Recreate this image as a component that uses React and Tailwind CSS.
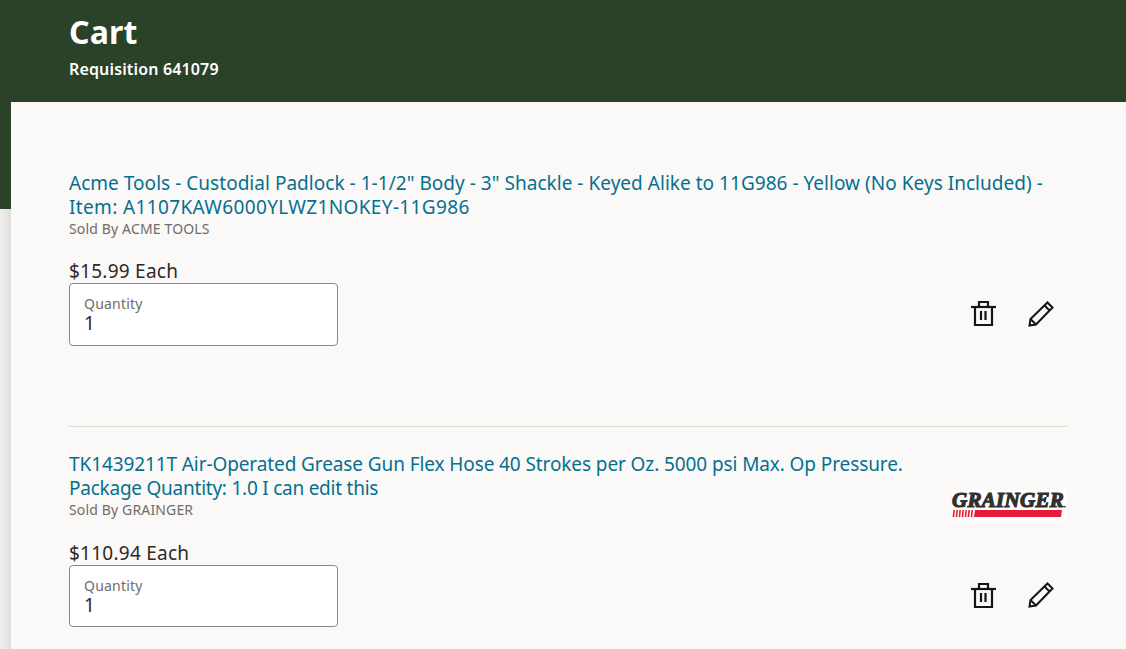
const items = [
  {
    lines: [
      {
        text: 'Acme Tools - Custodial Padlock - 1-1/2" Body - 3" Shackle - Keyed Alike to 11G986 - Yellow (No Keys Included) -',
        className: "tracking-[0.03px]",
      },
      { text: "Item: A1107KAW6000YLWZ1NOKEY-11G986", className: "tracking-[0.36px]" },
    ],
    seller: "Sold By ACME TOOLS",
    price: "$15.99 Each",
  },
  {
    lines: [
      {
        text: "TK1439211T Air-Operated Grease Gun Flex Hose 40 Strokes per Oz. 5000 psi Max. Op Pressure.",
        className: "tracking-[-0.1px]",
      },
      { text: "Package Quantity: 1.0 I can edit this", className: "tracking-[-0.24px]" },
    ],
    seller: "Sold By GRAINGER",
    price: "$110.94 Each",
    logo: true,
  },
]

function TrashIcon() {
  return (
    <svg width="25" height="25" viewBox="0 0 25 25" fill="none" stroke="#161513" strokeWidth="2.2">
      <path d="M0 6h25" />
      <path d="M4 6v18h17V6" />
      <path d="M8 6V1h9v5" />
      <path d="M10 10v9M14.5 10v9" />
    </svg>
  )
}

function PencilIcon() {
  return (
    <svg width="26" height="26" viewBox="0 0 26 26" fill="none" stroke="#161513" strokeWidth="2">
      <path d="M1.5 24.5l1-6.5L19.5 1.5l5 5L8 23.5z" />
      <path d="M16.5 4.5l5 5" />
      <path d="M2.5 18l5.5 5.5" />
    </svg>
  )
}

function GraingerLogo() {
  return (
    <div className="mb-[-1px] flex h-[31px] w-[115px] flex-col items-start bg-white pt-[1px]">
      <span
        className="whitespace-nowrap text-[21px] leading-[18px] font-bold italic tracking-[0.3px] text-[#33312c] [-webkit-text-stroke:1.2px_#33312c]"
        style={{ fontFamily: '"Liberation Serif", serif' }}
      >
        GRAINGER<span className="text-[5px] leading-none not-italic tracking-normal">.</span>
      </span>
      <svg width="110" height="7" viewBox="0 0 110 7" className="mt-[1px] shrink-0">
        <path fill="#e31b36" d="M1.4 0h1.6L2.2 7H.6zM4.4 0h1.6L5.2 7H3.6zM7.4 0h1.6L8.2 7H6.6zM10.4 0h1.6l-.8 7H9.6zM13.4 0h1.6l-.8 7h-1.6zM16.4 0h1.6l-.8 7h-1.6zM19.4 0h1.6l-.8 7h-1.6z" />
        <path fill="#e31b36" d="M23 0h87l-1 7H22z" />
      </svg>
    </div>
  )
}

function CartItem({ item }) {
  return (
    <div>
      <div className="flex items-end justify-between">
        <div>
          <a className="block whitespace-nowrap text-[19px] leading-[24px] text-[#04708f]">
            {item.lines.map((line) => (
              <span key={line.text} className={`block ${line.className}`}>
                {line.text}
              </span>
            ))}
          </a>
          <p className="text-[14px] tracking-[0.15px] leading-[20px] text-[#6f6c69]">{item.seller}</p>
        </div>
        {item.logo && <GraingerLogo />}
      </div>
      <p className={`${item.logo ? "mt-[21px]" : "mt-[20px]"} text-[19px] tracking-[0.25px] leading-[24px] text-[#2c2a28]`}>
        {item.price}
      </p>
      <div className="flex items-center justify-between">
        <label
          className={`block ${item.logo ? "h-[62px]" : "h-[63px]"} w-[269px] rounded-[4px] border border-[#8b8884] bg-white px-[14px] pt-[11px]`}
        >
          <span className="block text-[14px] tracking-[0.2px] leading-[18px] text-[#6f6c69]">Quantity</span>
          <span className="block text-[19px] leading-[20px] text-[#2c2a28]">1</span>
        </label>
        <div className="mr-[13px] mb-[2px] flex items-center gap-[32px]">
          <TrashIcon />
          <PencilIcon />
        </div>
      </div>
    </div>
  )
}

export default function App() {
  return (
    <div className="h-[649px] overflow-hidden bg-[#f1efed]" style={{ fontFamily: '"Noto Sans", sans-serif' }}>
      <header className="h-[102px] bg-[#2a4228] pl-[69px] pt-[10px] text-white">
        <h1 className="text-[32px] tracking-[0.2px] leading-[43px] font-bold">Cart</h1>
        <p className="mt-[5px] text-[16px] tracking-[0.15px] leading-[22px] font-semibold">Requisition 641079</p>
      </header>
      <div className="flex">
        <div className="w-[11px] shrink-0">
          <div className="h-[107px] bg-[#2a4228]" />
          <div className="h-[440px] bg-gradient-to-r from-[#f1efed] to-[#dfdddb]" />
        </div>
        <main className="h-[547px] flex-1 bg-[#fbf9f8] pl-[58px] pr-[59px] pt-[69px]">
          <CartItem item={items[0]} />
          <hr className="mt-[80px] mb-[25px] border-[#dfdcd8]" />
          <CartItem item={items[1]} />
        </main>
      </div>
    </div>
  )
}
